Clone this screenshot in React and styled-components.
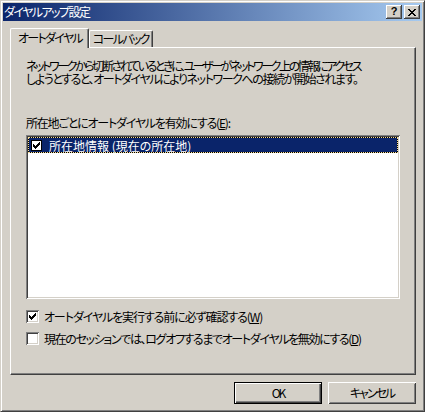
import React from 'react';
import styled, { createGlobalStyle } from 'styled-components';

const GlobalStyle = createGlobalStyle`
    html, body {
        margin: 0;
        padding: 0;
        background: #d4d0c8;
    }
    * {
        box-sizing: border-box;
    }
`;

const FONT = `"Noto Sans CJK JP", "Liberation Sans", sans-serif`;

function CheckGlyph({ color = '#000' }) {
    return (
        <svg width="7" height="7" viewBox="0 0 7 7" shapeRendering="crispEdges">
            <path
                fill={color}
                d="M6 0h1v1h-1z M5 1h2v1h-2z M0 2h1v1h-1z M4 2h3v1h-3z M0 3h2v1h-2z M3 3h3v1h-3z M0 4h5v1h-5z M1 5h3v1h-3z M2 6h1v1h-1z"
            />
        </svg>
    );
}

function CloseGlyph() {
    return (
        <svg width="8" height="7" viewBox="0 0 8 7" shapeRendering="crispEdges">
            <path
                fill="#000"
                d="M0 0h2v1h-2z M6 0h2v1h-2z M1 1h2v1h-2z M5 1h2v1h-2z M2 2h4v1h-4z M3 3h2v1h-2z M2 4h4v1h-4z M1 5h2v1h-2z M5 5h2v1h-2z M0 6h2v1h-2z M6 6h2v1h-2z"
            />
        </svg>
    );
}

export default function App() {
    return (
        <>
            <GlobalStyle />
            <Window>
                <TitleBar>
                    <TitleText>ダイヤルアップ設定</TitleText>
                    <CaptionButtons>
                        <CaptionButton><Question>?</Question></CaptionButton>
                        <CaptionButton><CloseGlyph /></CaptionButton>
                    </CaptionButtons>
                </TitleBar>

                <Client>
                    <TabStrip>
                        <Tab $active>オートダイヤル</Tab>
                        <Tab>コールバック</Tab>
                    </TabStrip>

                    <Panel>
                        <Desc>
                            <DescLine $spacing="-2.4px">ネットワークから切断されているときに、ユーザーがネットワーク上の情報にアクセス</DescLine>
                            <DescLine $spacing="-1.42px">しようとすると、オートダイヤルによりネットワークへの接続が開始されます。</DescLine>
                        </Desc>

                        <Label>所在地ごとにオートダイヤルを有効にする(<u>E</u>):</Label>

                        <ListBox>
                            <ListItem $selected>
                                <ItemCheck><CheckGlyph /></ItemCheck>
                                <span>所在地情報 (現在の所在地)</span>
                            </ListItem>
                        </ListBox>

                        <CheckRow $spacing="-1.1px">
                            <CheckBox><CheckGlyph /></CheckBox>
                            <span>オートダイヤルを実行する前に必ず確認する(<u>W</u>)</span>
                        </CheckRow>
                        <CheckRow $gap $spacing="-1.36px">
                            <CheckBox />
                            <span>現在のセッションでは、ログオフするまでオートダイヤルを無効にする(<u>D</u>)</span>
                        </CheckRow>
                    </Panel>

                    <ButtonRow>
                        <PushButton $default>OK</PushButton>
                        <PushButton>キャンセル</PushButton>
                    </ButtonRow>
                </Client>
            </Window>
        </>
    );
}

const Window = styled.div`
    width: 425px;
    height: 412px;
    display: flex;
    flex-direction: column;
    padding: 2px;
    background: #d4d0c8;
    border: 1px solid;
    border-color: #d4d0c8 #404040 #404040 #d4d0c8;
    box-shadow: inset 1px 1px #fff, inset -1px -1px #808080;
    font-family: ${FONT};
    font-size: 12px;
    font-feature-settings: "palt";
    letter-spacing: -1.2px;
    color: #000;
`;

const TitleBar = styled.div`
    height: 18px;
    display: flex;
    align-items: center;
    justify-content: space-between;
    padding: 0 2px 0 1px;
    background: linear-gradient(to right, #0a246a, #a6caf0);
`;

const TitleText = styled.div`
    color: #fff;
    font-size: 12px;
    line-height: 14px;
    letter-spacing: -1.55px;
`;

const CaptionButtons = styled.div`
    display: flex;
    gap: 2px;
`;

const CaptionButton = styled.div`
    width: 16px;
    height: 14px;
    display: flex;
    align-items: center;
    justify-content: center;
    background: #d4d0c8;
    box-shadow: inset -1px -1px #404040, inset 1px 1px #fff, inset -2px -2px #808080, inset 2px 2px #d4d0c8;
`;

const Question = styled.span`
    font-family: "Liberation Sans", sans-serif;
    font-weight: bold;
    font-size: 11px;
    line-height: 11px;
    letter-spacing: 0;
    margin-top: -1px;
`;

const Client = styled.div`
    flex: 1;
    display: flex;
    flex-direction: column;
    padding: 7px 6px 5px 7px;
`;

const TabStrip = styled.div`
    display: flex;
    align-items: flex-end;
    height: 19px;
    position: relative;
    z-index: 1;
`;

const Tab = styled.div`
    height: ${p => (p.$active ? '20px' : '17px')};
    margin-bottom: ${p => (p.$active ? '-1px' : '0')};
    padding: ${p => (p.$active ? '2px 6px 0 7px' : '1px 3px 0 3px')};
    background: #d4d0c8;
    border-left: 1px solid #fff;
    border-top: 1px solid #fff;
    border-right: 1px solid #404040;
    border-top-left-radius: 2px;
    border-top-right-radius: 2px;
    box-shadow: inset -1px 0 #808080;
    line-height: 14px;
    white-space: nowrap;
    letter-spacing: -1.7px;
`;

const Panel = styled.div`
    flex: 1;
    display: flex;
    flex-direction: column;
    padding: 11px 15px 0 15px;
    border: 1px solid;
    border-color: #fff #404040 #404040 #fff;
    box-shadow: inset -1px -1px #808080;
`;

const Desc = styled.div`
    line-height: 13px;
    white-space: nowrap;
`;

const DescLine = styled.div`
    letter-spacing: ${p => p.$spacing};
`;

const Label = styled.div`
    margin-top: 31px;
    line-height: 13px;
    white-space: nowrap;
`;

const ListBox = styled.div`
    margin-top: 6px;
    height: 164px;
    background: #fff;
    padding: 2px;
    box-shadow: inset 1px 1px #808080, inset -1px -1px #fff, inset 2px 2px #404040, inset -2px -2px #d4d0c8;
`;

const ListItem = styled.div`
    height: 16px;
    display: flex;
    align-items: center;
    gap: 7px;
    padding-left: 2px;
    color: ${p => (p.$selected ? '#fff' : '#000')};
    border: 1px dotted #f5db95;
    background: linear-gradient(#0a246a, #0a246a) padding-box, #000 border-box;
    white-space: nowrap;
    letter-spacing: 0;
`;

const ItemCheck = styled.div`
    width: 11px;
    height: 11px;
    background: #fff;
    border: 1px solid #000;
    display: flex;
    align-items: center;
    justify-content: center;
`;

const CheckRow = styled.div`
    display: flex;
    align-items: center;
    gap: 5px;
    height: 13px;
    margin-top: ${p => (p.$gap ? '9px' : '11px')};
    white-space: nowrap;
    line-height: 13px;
    letter-spacing: ${p => p.$spacing};
`;

const CheckBox = styled.div`
    width: 13px;
    height: 13px;
    flex: none;
    background: #fff;
    display: flex;
    align-items: center;
    justify-content: center;
    box-shadow: inset 1px 1px #808080, inset -1px -1px #fff, inset 2px 2px #404040, inset -2px -2px #d4d0c8;
`;

const ButtonRow = styled.div`
    display: flex;
    justify-content: flex-end;
    gap: 6px;
    margin-top: 7px;
`;

const PushButton = styled.div`
    width: 88px;
    height: 22px;
    display: flex;
    align-items: center;
    justify-content: center;
    background: #d4d0c8;
    line-height: 14px;
    letter-spacing: -2px;
    border: ${p => (p.$default ? '1px solid #000' : 'none')};
    box-shadow: ${p =>
        p.$default
            ? 'inset 1px 1px #fff, inset -1px -1px #404040, inset -2px -2px #808080'
            : 'inset 1px 1px #fff, inset -1px -1px #404040, inset 2px 2px #d4d0c8, inset -2px -2px #808080'};
`;
